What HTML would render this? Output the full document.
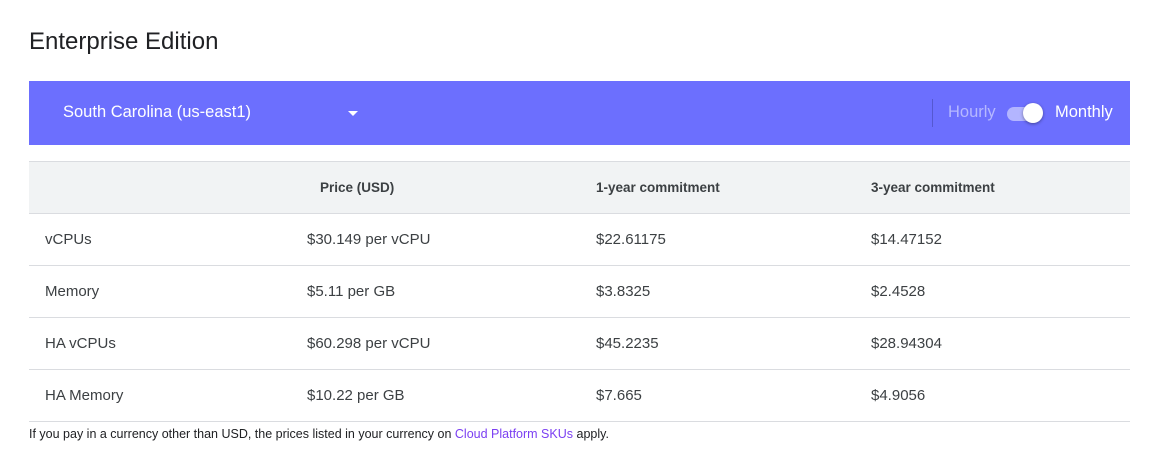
<!DOCTYPE html>
<html><head><style>
body{margin:0;background:#fff;font-family:"Liberation Sans",sans-serif;width:1154px;height:465px;overflow:hidden;position:relative;color:#3c4043}
.t{position:absolute;left:29px;top:28px;font-size:24px;color:#202124}
.bar{position:absolute;left:29px;top:81px;width:1101px;height:64px;background:#6c6ffe}
.sel{position:absolute;left:34px;top:22px;color:#fff;font-size:16.5px}
.arr{position:absolute;left:319px;top:30px;width:0;height:0;border-left:5px solid transparent;border-right:5px solid transparent;border-top:5px solid #fff}
.div{position:absolute;left:903px;top:18px;width:1px;height:28px;background:#5558d0}
.h{position:absolute;left:919px;top:22px;font-size:16.5px;color:#b6b8ff}
.m{position:absolute;left:1026px;top:22px;font-size:16.5px;color:#fff}
.tr{position:absolute;left:978px;top:26px;width:34px;height:14px;border-radius:7px;background:#b3b5ff}
.kn{position:absolute;left:994px;top:22px;width:20px;height:20px;border-radius:50%;background:#fff;box-shadow:0 1px 3px rgba(0,0,0,.4)}
table{position:absolute;left:29px;top:161px;width:1101px;border-collapse:collapse;font-size:15px;table-layout:fixed}
td{height:51px;border-bottom:1px solid #dadce0;padding:0;color:#3c4043}
tr.hd td{background:#f1f3f4;border-top:1px solid #dadce0;font-weight:bold;color:#3c4043;font-size:13.5px;padding-top:0}
tr.hd td.b{padding-left:13px}
td.a{padding-left:16px}
.f{position:absolute;left:29px;top:427px;font-size:12.5px;color:#202124}
.f a{color:#7b3ff2;text-decoration:none}
</style></head><body>
<div class="t">Enterprise Edition</div>
<div class="bar"><div class="sel">South Carolina (us-east1)</div><div class="arr"></div><div class="div"></div><div class="h">Hourly</div><div class="tr"></div><div class="kn"></div><div class="m">Monthly</div></div>
<table>
<colgroup><col style="width:278px"><col style="width:289px"><col style="width:275px"><col></colgroup>
<tr class="hd"><td class="a"></td><td class="b">Price (USD)</td><td>1-year commitment</td><td>3-year commitment</td></tr>
<tr><td class="a">vCPUs</td><td>$30.149 per vCPU</td><td>$22.61175</td><td>$14.47152</td></tr>
<tr><td class="a">Memory</td><td>$5.11 per GB</td><td>$3.8325</td><td>$2.4528</td></tr>
<tr><td class="a">HA vCPUs</td><td>$60.298 per vCPU</td><td>$45.2235</td><td>$28.94304</td></tr>
<tr><td class="a">HA Memory</td><td>$10.22 per GB</td><td>$7.665</td><td>$4.9056</td></tr>
</table>
<div class="f">If you pay in a currency other than USD, the prices listed in your currency on <a>Cloud Platform SKUs</a> apply.</div>
</body></html>
